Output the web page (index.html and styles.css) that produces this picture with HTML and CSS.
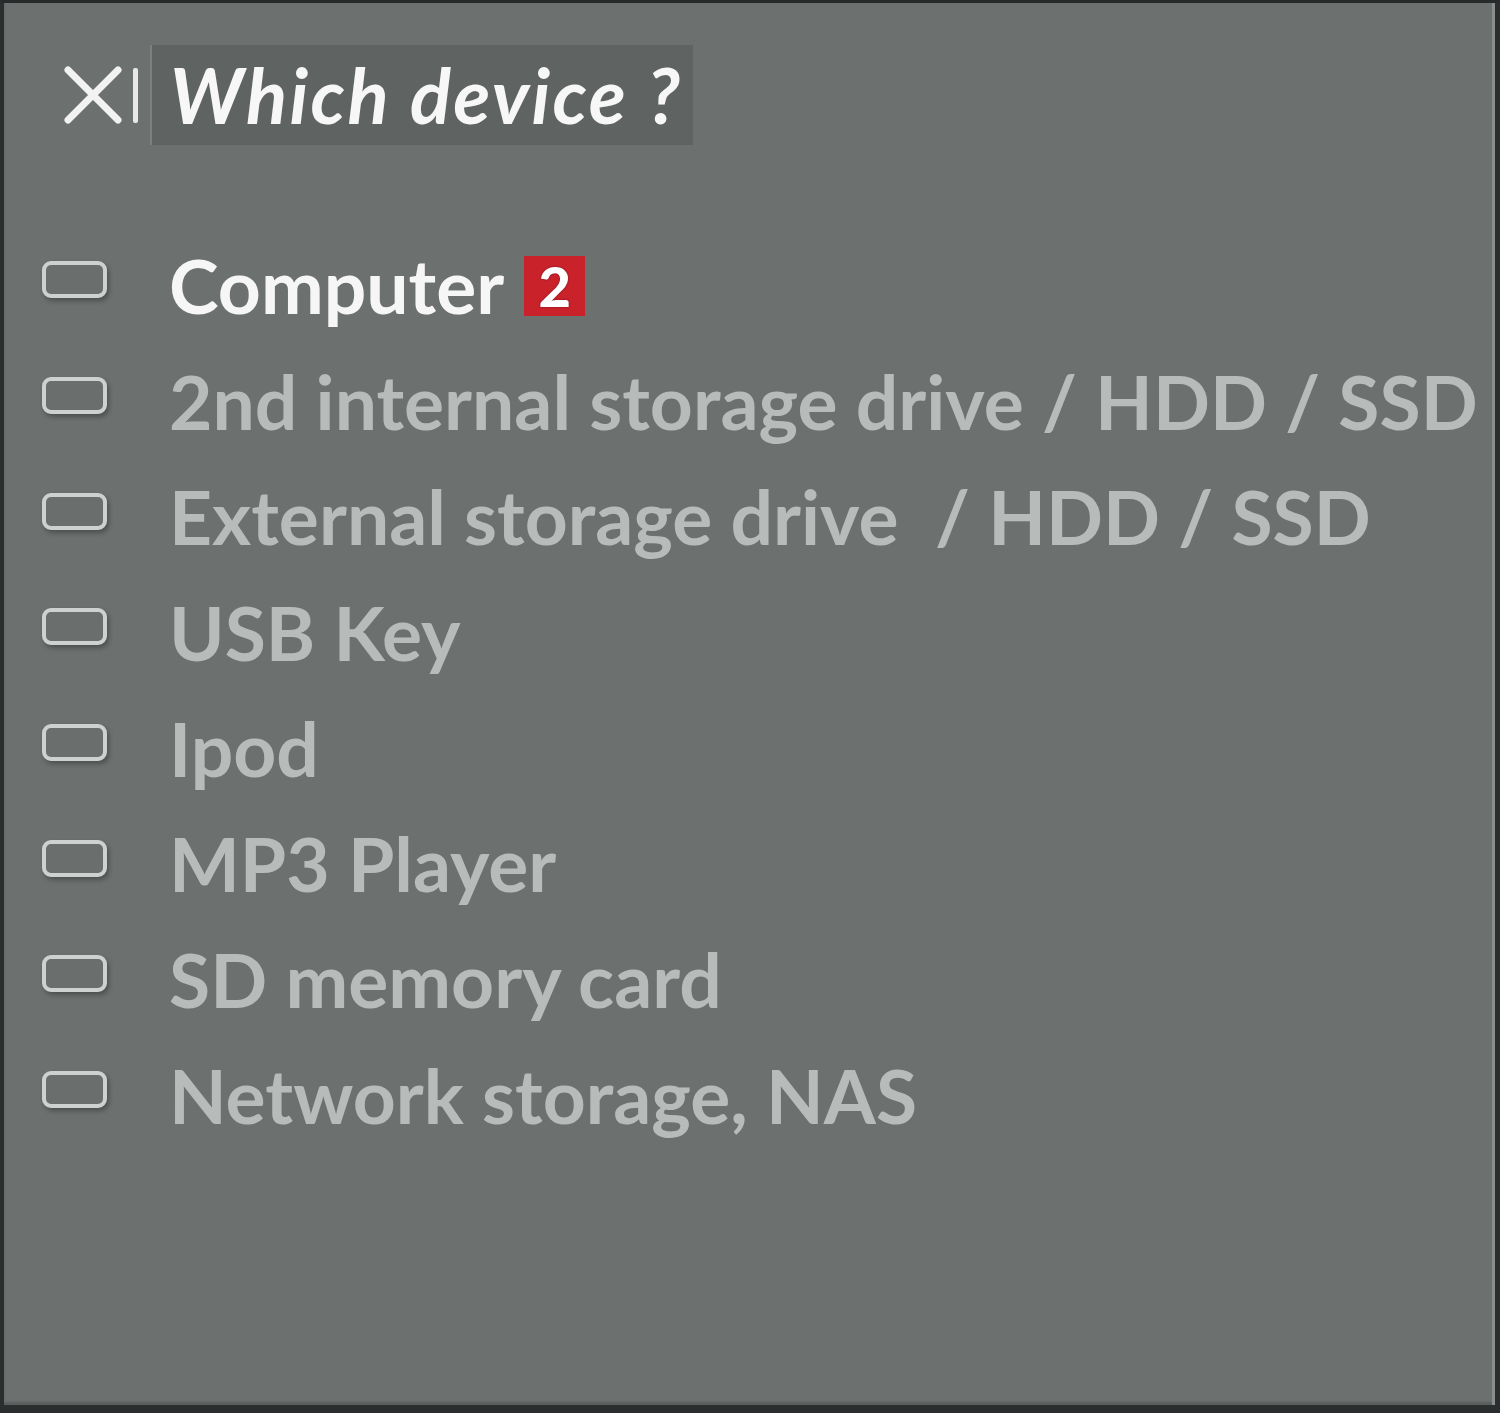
FILE: index.html
```html
<!DOCTYPE html>
<html lang="en">
<head>
<meta charset="utf-8">
<title>Which device ?</title>
<link rel="stylesheet" href="styles.css">
</head>
<body>
<div class="frame">
  <div class="header">
    <div class="close">
      <svg width="60" height="60" viewBox="0 0 60 60"><path d="M5 5 L55 55 M55 5 L5 55" stroke="#f2f2f2" stroke-width="7" stroke-linecap="round"/></svg>
      <span class="bar"></span>
    </div>
    <div class="title">Which device ?</div>
  </div>
  <ul class="list">
    <li class="item active"><span class="box"></span><span class="label">Computer</span><span class="badge">2</span></li>
    <li class="item"><span class="box"></span><span class="label">2nd internal storage drive / HDD / SSD</span></li>
    <li class="item"><span class="box"></span><span class="label">External storage drive&nbsp; / HDD / SSD</span></li>
    <li class="item"><span class="box"></span><span class="label">USB Key</span></li>
    <li class="item"><span class="box"></span><span class="label">Ipod</span></li>
    <li class="item"><span class="box"></span><span class="label">MP3 Player</span></li>
    <li class="item"><span class="box"></span><span class="label">SD memory card</span></li>
    <li class="item"><span class="box"></span><span class="label">Network storage, NAS</span></li>
  </ul>
</div>
</body>
</html>
```
FILE: styles.css
```css
html, body {
  margin: 0;
  padding: 0;
  background: #2b2f2f;
}
.frame {
  box-sizing: border-box;
  width: 1500px;
  height: 1413px;
  background: #6c706f;
  border-top: 3px solid #262a2a;
  border-left: 4px solid #2a2e2e;
  border-right: 5px solid #2a2e2e;
  border-bottom: 8px solid #2a2e2e;
  box-shadow: inset -3px 0 0 #8a8e8d, inset 0 -3px 2px #5a5e5d;
  font-family: "Lato", "Liberation Sans", sans-serif;
}
.header {
  display: flex;
  align-items: center;
  margin-top: 42px;
  height: 100px;
}
.close {
  display: flex;
  align-items: center;
  margin-left: 59px;
  gap: 10px;
  height: 100%;
}
.close svg {
  display: block;
}
.bar {
  display: block;
  width: 5px;
  height: 55px;
  background: #e8e8e8;
  border-radius: 2px;
}
.title {
  margin-left: 12px;
  height: 100px;
  width: 543px;
  box-sizing: border-box;
  padding-left: 18px;
  background: #5f6362;
  border-left: 2px solid #7c807f;
  color: #f7f7f7;
  font-weight: 700;
  font-style: italic;
  font-size: 76px;
  letter-spacing: 2.4px;
  line-height: 100px;
  white-space: nowrap;
}
.list {
  list-style: none;
  margin: 82px 0 0 0;
  padding: 0 0 0 38px;
}
.item {
  display: flex;
  align-items: center;
  height: 115.7px;
}
.box {
  flex: none;
  box-sizing: border-box;
  width: 65px;
  height: 37px;
  border: 4px solid #cdd1d0;
  border-radius: 9px;
  background: #6a6e6d;
  box-shadow: 2px 3px 4px rgba(40, 44, 44, 0.45);
  margin-right: 62px;
  margin-top: -10px;
}
.label {
  color: #b7bbba;
  font-size: 75px;
  font-weight: 700;
  white-space: nowrap;
}
.active .label {
  color: #f6f6f6;
}
.badge {
  display: flex;
  align-items: center;
  justify-content: center;
  width: 61px;
  height: 60px;
  margin-left: 20px;
  margin-top: 2px;
  background: #c9222b;
  color: #ffffff;
  font-size: 56px;
  font-weight: 900;
  text-shadow: 0 0 2px #6a0f14;
}
```
